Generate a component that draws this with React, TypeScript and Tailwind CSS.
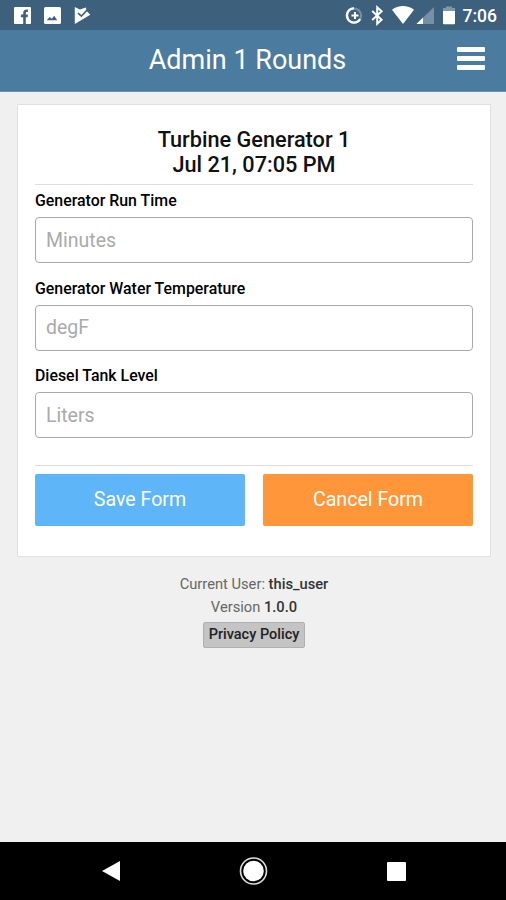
const FIELDS = [
  { label: 'Generator Run Time', placeholder: 'Minutes' },
  { label: 'Generator Water Temperature', placeholder: 'degF' },
  { label: 'Diesel Tank Level', placeholder: 'Liters' },
];

function StatusBar() {
  return (
    <div className="flex h-[30px] shrink-0 items-center justify-between bg-[#3d617c] text-white">
      {/* Notifications */}
      <svg width="100" height="30" viewBox="0 0 100 30" fill="#fff">
        <rect x="14" y="7" width="17" height="17" rx="1" />
        <path
          d="M23.2 24v-6.8h-2.3v-2.6h2.3v-1.7c0-2.3 1.3-3.5 3.4-3.5h1.3v2.5h-1c-.8 0-1.1.4-1.1 1.1v1.6h2.1l-.3 2.6h-1.8V24z"
          fill="#3d617c"
        />
        <rect x="44" y="7" width="17" height="17" rx="1.5" />
        <path d="M46.8 20.3l2.8-3.3 2.2 1.7 2.4-3 3 4.6z" fill="#3d617c" />
        <path d="M74.8 7l5 2.4 6-2 1.3 4 3.2 3.3L74.8 24z" />
        <path d="M78 13.2l3.4 3 6.1-6.6" fill="none" stroke="#3d617c" strokeWidth="1.6" />
      </svg>

      {/* System icons + clock */}
      <div className="flex items-center pr-[9px]">
        <svg width="118" height="30" viewBox="342 0 118 30" fill="#fff">
          <circle cx="353" cy="15.5" r="7.1" fill="none" stroke="#fff" strokeOpacity=".3" strokeWidth="2" />
          <path d="M353 8.4a7.1 7.1 0 1 0 6.1 10.7" fill="none" stroke="#fff" strokeWidth="2.3" />
          <path d="M354 12v7M350.5 15.5h7" stroke="#fff" strokeWidth="2" />
          <path d="M371.2 11l9.4 8.8-4.4 4V7.2l4.4 4-9.4 8.8" fill="none" stroke="#fff" strokeWidth="2" />
          <path d="M391 9.7c6.5-4.8 15.5-4.8 22 0L402 24z" />
          <path d="M433 7v17h-17.5z" opacity=".3" />
          <path d="M422 17.6V24h-6.5z" />
          <path d="M445 6.6h6V8h3v4h-12V8h3z" opacity=".35" />
          <path d="M442 11h12v12.2q0 1-1 1h-10q-1 0-1-1z" />
        </svg>
        <span className="ml-[2px] pt-px text-[17.5px] leading-[30px] font-medium">7:06</span>
      </div>
    </div>
  );
}

function Header() {
  return (
    <header className="grid h-[62px] shrink-0 grid-cols-[1fr_auto_1fr] items-center border-b border-[#6d93af] bg-[#4b7b9e] pr-[21px] pl-[9px] text-white">
      <span />
      <h1 className="pb-[2px] pl-[1px] text-[27px] leading-8">Admin 1 Rounds</h1>
      <button className="mb-[4px] flex flex-col gap-1 justify-self-end" aria-label="Menu">
        <span className="h-[5px] w-[28px] rounded-[1px] bg-white" />
        <span className="h-[5px] w-[28px] rounded-[1px] bg-white" />
        <span className="h-[5px] w-[28px] rounded-[1px] bg-white" />
      </button>
    </header>
  );
}

function NavBar() {
  return (
    <nav className="grid h-[58px] shrink-0 grid-cols-3 items-center bg-black pr-[38px] pl-[40px]">
      <svg className="justify-self-center" width="18" height="22" viewBox="0 0 18 22">
        <path d="M18 1v20L0 11z" fill="#fff" />
      </svg>
      <svg className="justify-self-center" width="30" height="30" viewBox="0 0 30 30">
        <circle cx="14.5" cy="15" r="13" fill="none" stroke="#ddd" strokeWidth="1.6" />
        <circle cx="14.5" cy="15" r="10.3" fill="#fff" />
      </svg>
      <span className="mr-px h-[19px] w-[19px] justify-self-center rounded-[1px] bg-white" />
    </nav>
  );
}

export default function App() {
  return (
    <div className="flex h-[900px] w-[506px] flex-col overflow-hidden bg-[#f0f0f0] font-['Roboto',sans-serif] text-black">
      <StatusBar />
      <Header />

      <main className="flex flex-1 flex-col items-center pt-3 pl-[2px]">
        <section className="h-[453px] w-[474px] border border-[#e0e0e0] bg-white px-[17px] pt-[22px]">
          <h2 className="border-b border-[#dddddd] pb-[7px] text-center text-[21.7px] leading-[25px] font-medium text-[#111]">
            Turbine Generator 1
            <br />
            Jul 21, 07:05 PM
          </h2>

          <form>
            {FIELDS.map((field) => (
              <label key={field.label} className="block h-[87.5px] pt-[6px]">
                <span className="block h-[26px] text-[15.9px] leading-5 font-medium">{field.label}</span>
                <input
                  className="block h-[46px] w-full rounded-[4px] border-[1.5px] border-[#aaaaaa] bg-white px-[10px] text-[19.5px] placeholder:text-[#aaaaaa]"
                  placeholder={field.placeholder}
                />
              </label>
            ))}

            <div className="mt-[17px] grid grid-cols-2 gap-[18px] border-t border-[#dddddd] pt-2 text-[19.6px] text-white">
              <button type="button" className="h-[52px] rounded-[2px] bg-[#5eb5f7]">
                Save Form
              </button>
              <button type="button" className="h-[52px] rounded-[2px] bg-[#ff9639]">
                Cancel Form
              </button>
            </div>
          </form>
        </section>

        {/* App info */}
        <div className="mt-4 flex flex-col items-center text-[14.7px] leading-[23px] text-[#666]">
          <p>
            Current User: <span className="font-medium text-[#333]">this_user</span>
          </p>
          <p>
            Version <span className="font-medium text-[#333]">1.0.0</span>
          </p>
          <button className="mt-[3px] h-[26px] w-[102px] rounded-[2px] border border-[#b0b0b0] bg-[#c4c4c4] text-[14.5px] leading-none font-medium whitespace-nowrap text-[#222]">
            Privacy Policy
          </button>
        </div>
      </main>

      <NavBar />
    </div>
  );
}
